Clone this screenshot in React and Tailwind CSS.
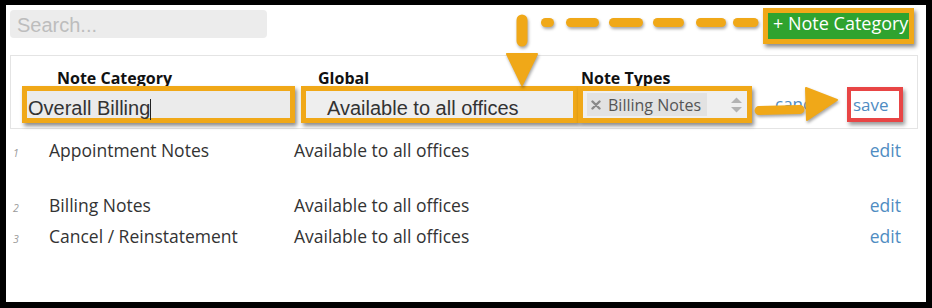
export default function App() {
  const rows = [
    { n: 1, name: "Appointment Notes", h: "h-[55px]" },
    { n: 2, name: "Billing Notes", h: "h-[31px]" },
    { n: 3, name: "Cancel / Reinstatement", h: "h-[31px]" },
  ];
  return (
    <div className="relative w-[932px] h-[308px] bg-black pt-[5px] px-[6px] font-['Open_Sans',sans-serif]">
      <div className="h-[297px] bg-white">
        {/* top bar */}
        <div className="flex justify-between items-start h-[50px] pl-[4px] pr-[12px]">
          <div className="mt-[5px] w-[257px] h-[28px] rounded-[4px] bg-[#ececec] pl-[7px] pt-[1px] leading-[28px] text-[20px] text-[#bdbdbd] font-['Liberation_Sans',Arial,sans-serif]">
            Search...
          </div>
          <div className="mt-[3px] w-[151px] border-[5px] border-[#f0a818] shadow-[2px_3px_4px_rgba(0,0,0,0.45)]">
            <div className="h-[26px] bg-[#2fa32f] pl-[5px] text-[18px] leading-[21px] text-white whitespace-nowrap">
              + Note Category
            </div>
          </div>
        </div>

        {/* edit panel */}
        <div className="ml-[4px] w-[908px] h-[74px] border border-[#e4e4e4] pt-[12px]">
          <div className="flex h-[18px] leading-[20px] text-[16px] font-bold text-[#111]">
            <span className="ml-[46px] w-[261px]">Note Category</span>
            <span className="w-[263px]">Global</span>
            <span>Note Types</span>
          </div>
          <div className="relative flex items-start h-[37px] pl-[11px]">
            <div className="w-[273px] h-[37px] border-[5px] border-[#f0a818] bg-[#ebebeb] pl-[1px] text-[20px] leading-[34px] text-[#333] font-['Liberation_Sans',Arial,sans-serif] whitespace-nowrap shadow-[2px_3px_4px_rgba(0,0,0,0.45)]">
              Overall Billing
              <span className="inline-block w-[1px] h-[21px] bg-[#222] align-[-5px]"></span>
            </div>
            <div className="ml-[6px] w-[277px] h-[37px] border-[5px] border-[#f0a818] bg-[#eeeeee] pl-[21px] text-[20px] leading-[34px] text-[#333] font-['Liberation_Sans',Arial,sans-serif] whitespace-nowrap shadow-[2px_3px_4px_rgba(0,0,0,0.45)]">
              Available to all offices
            </div>
            <div className="w-[174px] h-[37px] border-[5px] border-[#f0a818] bg-[#efefef] flex items-center pl-[4px] pr-[4px] shadow-[2px_3px_4px_rgba(0,0,0,0.45)]">
              <div className="h-[23px] w-[120px] bg-[#e2e2e2] flex items-center pl-[4px]">
                <svg width="10" height="10" viewBox="0 0 10 10">
                  <path d="M1.5 1.5 L8.5 8.5 M8.5 1.5 L1.5 8.5" stroke="#8a8a8a" strokeWidth="2.4" strokeLinecap="round" />
                </svg>
                <span className="ml-[7px] text-[16px] leading-[20px] text-[#555] whitespace-nowrap">Billing Notes</span>
              </div>
              <svg className="ml-auto" width="13" height="18" viewBox="0 0 13 18">
                <path d="M6.5 1.5 L12 7 L1 7 Z" fill="#b3b3b3" />
                <path d="M1 11 L12 11 L6.5 16.5 Z" fill="#b3b3b3" />
              </svg>
            </div>
            <span className="ml-[23px] w-[72px] text-[17px] leading-[35px] text-[#4f8cc2]">cancel</span>
            <div className="mt-[1px] w-[56px] h-[35px] border-[4px] border-[#e84545] bg-white pl-[2px] text-[17px] leading-[27px] text-[#4f8cc2] shadow-[2px_3px_4px_rgba(0,0,0,0.4)]">
              save
            </div>
          </div>
        </div>

        {/* list */}
        <div className="mt-[9px]">
          {rows.map((r) => (
            <div key={r.n} className={`flex items-baseline ${r.h} text-[17.5px] leading-[24px] text-[#333]`}>
              <span className="w-[43px] pl-[7px] text-[10.5px] italic text-[#9a9a9a]">{r.n}</span>
              <span className="w-[245px] whitespace-nowrap">{r.name}</span>
              <span className="flex-1 whitespace-nowrap">Available to all offices</span>
              <span className="pr-[25px] text-[#4f8cc2]">edit</span>
            </div>
          ))}
        </div>
      </div>

      {/* annotation arrows */}
      <svg
        className="absolute left-0 top-0 pointer-events-none drop-shadow-[1px_2px_1.5px_rgba(0,0,0,0.35)]"
        width="932"
        height="308"
        viewBox="0 0 932 308"
      >
        <g stroke="#f0a818" strokeLinecap="round" fill="none">
          <line x1="545.5" y1="22.5" x2="549.5" y2="22.5" strokeWidth="9" />
          <line x1="570.5" y1="22.5" x2="594.5" y2="22.5" strokeWidth="9" />
          <line x1="613.5" y1="22.5" x2="638.5" y2="22.5" strokeWidth="9" />
          <line x1="657.5" y1="22.5" x2="679.5" y2="22.5" strokeWidth="9" />
          <line x1="700.5" y1="22.5" x2="721.5" y2="22.5" strokeWidth="9" />
          <line x1="737.5" y1="22.5" x2="754" y2="22.5" strokeWidth="9" />
          <line x1="522" y1="20" x2="522" y2="41" strokeWidth="11" />
          <line x1="759" y1="110.5" x2="800" y2="109.5" strokeWidth="9" />
        </g>
        <path d="M806 88 L837 100 L807 120 Z" fill="#f0a818" stroke="#f0a818" strokeWidth="2" strokeLinejoin="round" />
        <path d="M507 54 L537 54 L522 85 Z" fill="#f0a818" stroke="#f0a818" strokeWidth="2" strokeLinejoin="round" />
      </svg>
    </div>
  );
}
